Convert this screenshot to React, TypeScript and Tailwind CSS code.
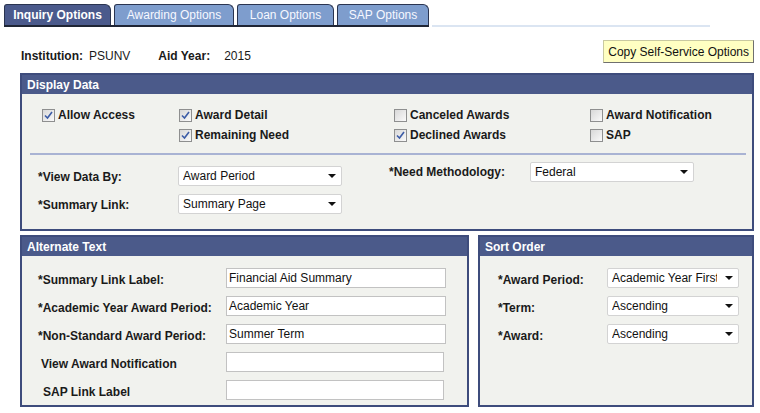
import React from "react";

const font = { fontFamily: '"Liberation Sans", Arial, sans-serif' };

function Check({ checked }: { checked: boolean }) {
  return (
    <span className="w-[13px] h-[13px] border border-[#8e8f8f] bg-gradient-to-br from-[#d8d8d8] to-[#fafafa] flex items-center justify-center shrink-0">
      {checked && (
        <svg width="9" height="9" viewBox="0 0 9 9">
          <path d="M1 4.5 L3.5 7 L8 1" stroke="#3c5ca6" strokeWidth="1.6" fill="none" />
        </svg>
      )}
    </span>
  );
}

function CB({ label, checked }: { label: string; checked: boolean }) {
  return (
    <div className="flex items-center gap-[3px] h-[20px]">
      <Check checked={checked} />
      <span className="font-bold text-[12px] leading-[14px] text-[#1a1a1a]">{label}</span>
    </div>
  );
}

function Select({ value, w, tw }: { value: string; w: string; tw?: string }) {
  return (
    <div className={`${w} h-[20px] border border-[#d3d3d3] rounded-[2px] bg-white flex items-center pl-[4px] pr-[5px] text-[12px] leading-[14px] text-[#111] overflow-hidden`}>
      <span className={`${tw ?? "flex-1"} whitespace-nowrap overflow-hidden`}>{value}</span>
      {tw && <span className="flex-1" />}
      <svg width="8" height="4" viewBox="0 0 8 4" className="shrink-0 ml-[6px]">
        <path d="M0 0 H8 L4 4 Z" fill="#111" />
      </svg>
    </div>
  );
}

function Input({ value, w = "w-[220px]" }: { value: string; w?: string }) {
  return (
    <div className={`${w} h-[20px] border border-[#c2c2c2] bg-white flex items-center px-[2px] text-[12px] leading-[14px] text-[#111]`}>
      {value}
    </div>
  );
}

function Panel({ title, children, className }: { title: string; children: React.ReactNode; className: string }) {
  return (
    <div className={`${className} border-2 border-[#3e4c7c] bg-[#f1f2ee] flex flex-col`}>
      <div className="h-[19px] bg-[#4b5a8a] text-white font-bold text-[12px] leading-[14px] pl-[5px] flex items-center shrink-0">{title}</div>
      {children}
    </div>
  );
}

const Tab = ({ label, active, w }: { label: string; active?: boolean; w: string }) => (
  <div
    className={`${w} h-[21px] border-t border-l border-r border-[#2a3450] rounded-tl-[3px] rounded-tr-[6px] flex items-center justify-center text-[12px] leading-[14px] ${
      active ? "bg-[#4b5a8c] text-white font-bold" : "bg-[#7e9dcd] text-[#f6f8ff]"
    }`}
  >
    {label}
  </div>
);

export default function App() {
  return (
    <div className="w-[760px] h-[413px] bg-white overflow-hidden text-[#1a1a1a]" style={font}>
      {/* Tabs */}
      <div className="flex items-end pt-[4px] pl-[4px]">
        <div className="flex gap-[3px] border-b-[2px] border-[#1f2535]">
          <Tab label="Inquiry Options" active w="w-[107px]" />
          <Tab label="Awarding Options" w="w-[120px]" />
          <Tab label="Loan Options" w="w-[97px]" />
          <Tab label="SAP Options" w="w-[92px]" />
        </div>
        <div className="w-[278px] h-[2px] bg-[#dbe5f2] ml-[3px]" />
      </div>

      {/* Info row */}
      <div className="flex h-[46px] pl-[21px] pr-[6px]">
        <div className="flex mt-[22px] text-[12px] leading-[14px] h-[14px] items-center">
          <span className="font-bold">Institution:</span>
          <span className="ml-[6px]">PSUNV</span>
          <span className="font-bold ml-[28px]">Aid Year:</span>
          <span className="ml-[14px]">2015</span>
        </div>
        <div className="flex-1" />
        <div className="mt-[13px] h-[23px] px-[4px] bg-[#ffffc2] border border-[#c9c9a0] border-r-[#6f6f6f] border-b-[#6f6f6f] flex items-center text-[12px] leading-[14px] text-[#111]">
          Copy Self-Service Options
        </div>
      </div>

      {/* Display Data */}
      <Panel title="Display Data" className="ml-[20px] w-[734px] h-[158px]">
        <div className="flex pl-[20px] pt-[11px]">
          <div className="w-[137px]">
            <CB label="Allow Access" checked />
          </div>
          <div className="w-[215px] flex flex-col">
            <CB label="Award Detail" checked />
            <CB label="Remaining Need" checked />
          </div>
          <div className="w-[196px] flex flex-col">
            <CB label="Canceled Awards" checked={false} />
            <CB label="Declined Awards" checked />
          </div>
          <div className="flex flex-col">
            <CB label="Award Notification" checked={false} />
            <CB label="SAP" checked={false} />
          </div>
        </div>
        <div className="ml-[8px] mr-[6px] mt-[8px] h-[2px] bg-[#a9b3d3]" />
        <div className="flex pl-[16px] pt-[7px]">
          <div className="flex flex-col gap-[8px] pt-[4px]">
            <div className="flex items-center">
              <span className="w-[140px] font-bold text-[12px] leading-[14px] pt-[2px]">*View Data By:</span>
              <Select value="Award Period" w="w-[164px]" />
            </div>
            <div className="flex items-center">
              <span className="w-[140px] font-bold text-[12px] leading-[14px] pt-[2px]">*Summary Link:</span>
              <Select value="Summary Page" w="w-[164px]" />
            </div>
          </div>
          <div className="flex items-start ml-[47px]">
            <span className="w-[141px] font-bold text-[12px] leading-[14px] pt-[3px]">*Need Methodology:</span>
            <Select value="Federal" w="w-[164px]" />
          </div>
        </div>
      </Panel>

      {/* Bottom panels */}
      <div className="flex gap-[9px] ml-[20px] mt-[4px]">
        <Panel title="Alternate Text" className="w-[449px] h-[172px]">
          <div className="flex flex-col gap-[8px] pl-[16px] pt-[12px]">
            {[
              ["*Summary Link Label:", "Financial Aid Summary", "", "w-[220px]"],
              ["*Academic Year Award Period:", "Academic Year", "", "w-[220px]"],
              ["*Non-Standard Award Period:", "Summer Term", "", "w-[220px]"],
              ["View Award Notification", "", "pl-[3px]", "w-[218px]"],
              ["SAP Link Label", "", "pl-[5px]", "w-[218px]"],
            ].map(([l, v, p, w]) => (
              <div key={l} className="flex items-center h-[20px]">
                <span className={`w-[188px] font-bold text-[12px] leading-[14px] pt-[3px] ${p}`}>{l}</span>
                <Input value={v} w={w} />
              </div>
            ))}
          </div>
        </Panel>
        <Panel title="Sort Order" className="w-[276px] h-[172px]">
          <div className="flex flex-col gap-[8px] pl-[18px] pt-[12px]">
            {[
              ["*Award Period:", "Academic Year First"],
              ["*Term:", "Ascending"],
              ["*Award:", "Ascending"],
            ].map(([l, v]) => (
              <div key={l} className="flex items-center h-[20px]">
                <span className="w-[109px] font-bold text-[12px] leading-[14px] pt-[3px]">{l}</span>
                <Select value={v} w="w-[132px]" tw="w-[105px]" />
              </div>
            ))}
          </div>
        </Panel>
      </div>
    </div>
  );
}
